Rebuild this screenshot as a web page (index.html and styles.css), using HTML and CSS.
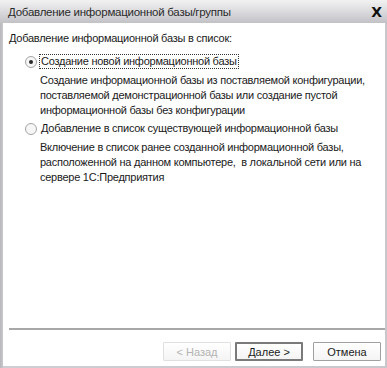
FILE: index.html
```html
<!DOCTYPE html>
<html lang="ru">

<head>
    <meta charset="utf-8">
    <title>Добавление информационной базы/группы</title>
    <link rel="stylesheet" href="styles.css">
</head>

<body>
    <div class="okno">
        <div class="zagolovok">
            <span class="zagolovok-tekst">Добавление информационной базы/группы</span>
            <span class="zakryt">X</span>
        </div>

        <div class="soderzhimoe">
            <p class="nadpis">Добавление информационной базы в список:</p>

            <div class="variant">
                <svg class="radio" width="12" height="12" viewBox="0 0 12 12">
                    <circle cx="6" cy="6" r="5.5" fill="#f6f6f6" stroke="#a4a4a4"/>
                    <circle cx="6" cy="6" r="2" fill="#2a2a2a"/>
                </svg>
                <span class="variant-tekst fokus">Создание новой информационной базы</span>
            </div>
            <p class="opisanie">Создание информационной базы из поставляемой конфигурации, поставляемой демонстрационной базы или создание пустой информационной базы без конфигурации</p>

            <div class="variant">
                <svg class="radio" width="12" height="12" viewBox="0 0 12 12">
                    <circle cx="6" cy="6" r="5.5" fill="#f6f6f6" stroke="#a4a4a4"/>
                </svg>
                <span class="variant-tekst">Добавление в список существующей информационной базы</span>
            </div>
            <p class="opisanie">Включение в список ранее созданной информационной базы, расположенной на данном компьютере,&nbsp; в локальной сети или на сервере 1С:Предприятия</p>

            <div class="niz">
                <div class="razdelitel"></div>
                <div class="knopki">
                    <button class="knopka neaktivna">&lt; Назад</button>
                    <button class="knopka glavnaya">Далее &gt;</button>
                    <button class="knopka otmena">Отмена</button>
                </div>
            </div>
        </div>
    </div>
</body>

</html>
```

FILE: styles.css
```css
body {
    margin: 0;
    background-color: #c4c4c8;
    font-family: 'Liberation Sans', Arial, sans-serif;
    font-size: 11px;
    letter-spacing: -0.25px;
    color: #1a1a1a;
}

.okno {
    width: 387px;
    height: 368px;
    display: flex;
    flex-direction: column;
    background: linear-gradient(to right, #b8b8bc, #cfcfd3 4px, #c8c8cc);
}

.zagolovok {
    height: 23px;
    display: flex;
    align-items: center;
    justify-content: space-between;
    padding: 0 5px 0 8px;
    background: linear-gradient(to bottom, #f2f2f2, #d6d6da 60%, #c2c2c6);
    flex-shrink: 0;
}

.zagolovok-tekst {
    color: #2a2a2a;
    font-size: 11.5px;
    margin-top: 1px;
}

/* крестик закрытия */
.zakryt {
    font-family: 'DejaVu Sans', sans-serif;
    font-weight: bold;
    font-size: 14px;
    line-height: 14px;
    letter-spacing: 0;
    color: #111111;
}

.soderzhimoe {
    flex: 1;
    margin: 0 2px 2px 3px;
    background-color: #ffffff;
    display: flex;
    flex-direction: column;
    padding: 8px 0 0 6px;
}

p {
    margin: 0;
    line-height: 15px;
}

.nadpis {
    margin-bottom: 8px;
}

.variant {
    display: flex;
    align-items: center;
    margin-left: 16px;
    height: 15px;
}

.radio {
    display: block;
    margin-right: 2px;
}

.variant-tekst {
    padding: 0 1px;
    line-height: 13px;
    border: 1px solid transparent;
}

.fokus {
    border: 1px dotted #333;
}

.opisanie {
    margin: 4px 4px 3px 31px;
}

.niz {
    margin-top: auto;
}

.razdelitel {
    height: 2px;
    background-color: #a8a8a8;
    margin-bottom: 12px;
}

.knopki {
    display: flex;
    justify-content: flex-end;
    padding-right: 4px;
    height: 24px;
}

.knopka {
    width: 68px;
    height: 19px;
    padding: 0;
    font-family: 'Liberation Sans', Arial, sans-serif;
    font-size: 11px;
    color: #1a1a1a;
    background: linear-gradient(to bottom, #ffffff, #f4f4f4);
    border: 1px solid #a0a0a0;
    border-radius: 1px;
}

.neaktivna {
    color: #b4b4b4;
    border-color: #e0e0e0;
    margin-right: 4px;
}

.glavnaya {
    border: 2px solid #7a7a7a;
    margin-right: 10px;
}
```
